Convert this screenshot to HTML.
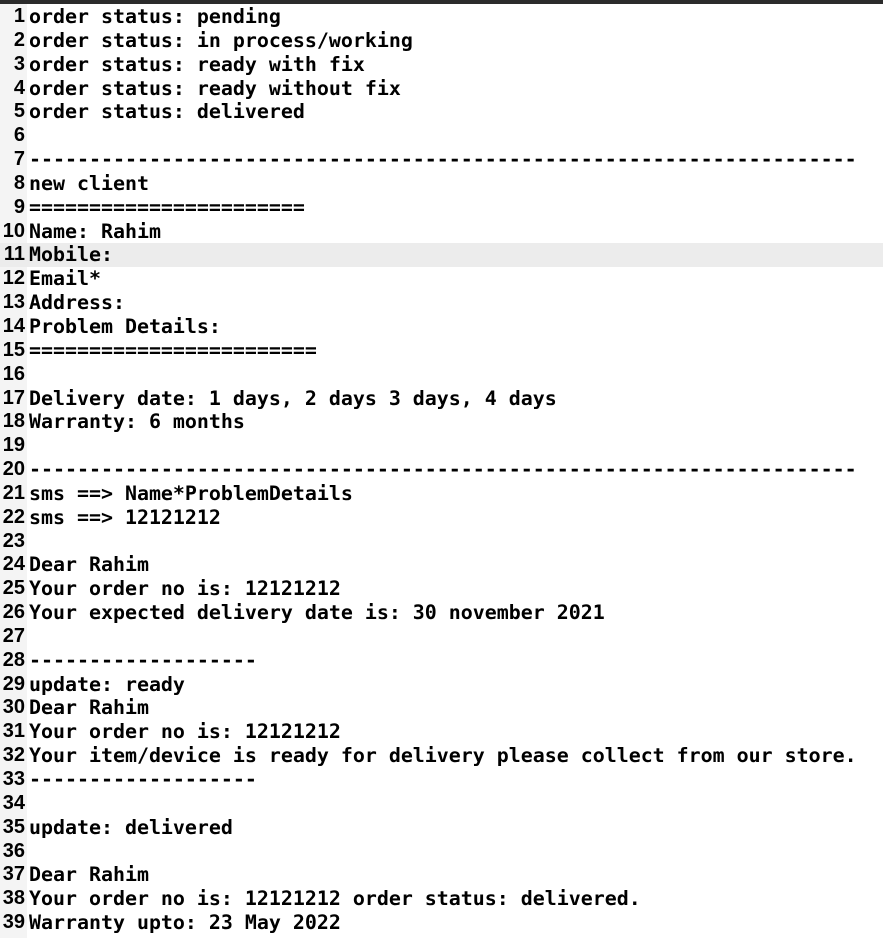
<!DOCTYPE html><html><head><style>
body{margin:0;width:883px;height:938px;background:#fff;overflow:hidden;position:relative}
.top{position:absolute;top:0;left:0;width:883px;height:4px;background:#2b2b2b}
.g{position:absolute;top:4px;left:0;width:27px;height:934px;background:#f4f4f4}
.hl{position:absolute;left:0;top:243px;width:883px;height:24px;background:#ececec}
.c{position:absolute;top:5px;left:0;font:bold 19.93px "DejaVu Sans Mono","Liberation Mono",monospace;line-height:23.84px;color:#000;white-space:pre}
.r{display:flex}.n{width:25px;text-align:right;font:bold 20px "Liberation Sans",sans-serif;line-height:23.84px}.t{padding-left:4px}
</style></head><body><div class="top"></div><div class="g"></div><div class="hl"></div><div class="c" id="c"></div>
<script>
var L=["order status: pending","order status: in process/working","order status: ready with fix","order status: ready without fix","order status: delivered","","---------------------------------------------------------------------","new client","=======================","Name: Rahim","Mobile:","Email*","Address:","Problem Details:","========================","","Delivery date: 1 days, 2 days 3 days, 4 days","Warranty: 6 months","","---------------------------------------------------------------------","sms ==> Name*ProblemDetails","sms ==> 12121212","","Dear Rahim","Your order no is: 12121212","Your expected delivery date is: 30 november 2021","","-------------------","update: ready","Dear Rahim","Your order no is: 12121212","Your item/device is ready for delivery please collect from our store.","-------------------","","update: delivered","","Dear Rahim","Your order no is: 12121212 order status: delivered.","Warranty upto: 23 May 2022"];
var h="";L.forEach(function(s,i){h+='<div class="r"><span class="n">'+(i+1)+'</span><span class="t">'+s+'</span></div>'});document.getElementById("c").innerHTML=h;
</script></body></html>
